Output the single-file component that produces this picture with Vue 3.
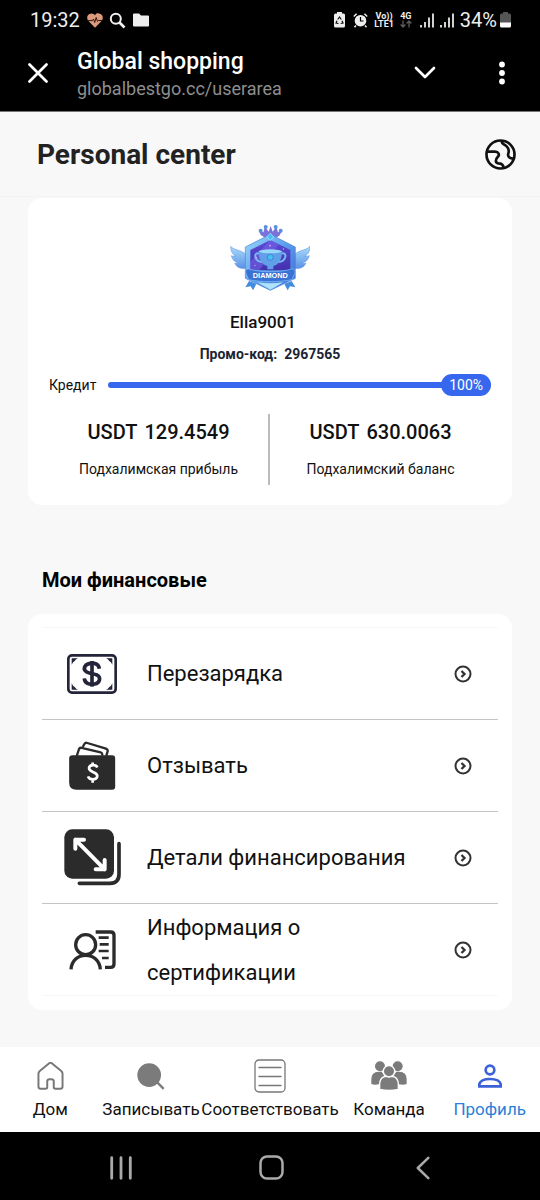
<template>
  <div class="screen">
    <header class="device-top">
      <div class="status-bar">
        <span class="clock">19:32</span>
        <svg class="heart" viewBox="0 0 16 15" aria-hidden="true">
          <path d="M8 14.8L1.4 8C-.6 5.500 0 2.200 2.400 1 4.600-.1 7 .5 8 2.400 9-.5 11.400-.1 13.600 1 16 2.200 16.600 5.500 14.600 8z" fill="#dc9a7c" />
          <path d="M1 7.600h4.500l1-1.600 1.200 3.500 1.500-5 1.300 4 1-1H15" fill="none" stroke="#2b1710" stroke-width="1" />
        </svg>
        <svg class="lens" viewBox="0 0 17 17" fill="none" stroke="#f2f2f2" aria-hidden="true">
          <circle cx="6.800" cy="6.800" r="5" stroke-width="2" />
          <path d="M10.500 10.500L15.500 15.500" stroke-width="2.600" />
        </svg>
        <svg class="folder" viewBox="0 0 16 14" aria-hidden="true">
          <path d="M1 .5h5l2 2h7q1 0 1 1v9q0 1-1 1H1q-1 0-1-1v-11q0-1 1-1z" fill="#eee" />
        </svg>
        <div class="status-right">
          <svg class="saver" viewBox="0 0 11 16" aria-hidden="true">
            <path d="M3 0h5v1.500h1.500q1.500 0 1.500 1.500v11q0 1.500-1.500 1.500h-8Q0 15.500 0 14V3q0-1.500 1.500-1.500H3z" fill="#eee" />
            <path d="M3.700 7.500L5.500 5l1.800 2.500M8 8.700l1 2.300-2.300.5M4.500 11.500L2 11l1-2.300" fill="none" stroke="#111" stroke-width="1.200" />
          </svg>
          <svg class="alarm" viewBox="0 0 15 15" aria-hidden="true">
            <circle cx="7.500" cy="7.700" r="5.800" fill="#eee" />
            <path d="M.8 3.500L3.600.8M14.200 3.500L11.400.8M3 12.500l-1.500 1.800M12 12.500l1.500 1.800" stroke="#eee" stroke-width="1.500" />
            <path d="M7.500 4v4h3" fill="none" stroke="#000" stroke-width="1.200" />
          </svg>
          <span class="net volte"><b>Vo))</b><b>LTE1</b></span>
          <span class="net fourg">
            <b>4G</b>
            <svg viewBox="0 0 12 8" fill="none" stroke="#5c5c5c" stroke-width="1.300" aria-hidden="true">
              <path d="M3 .5v6.500M.6 4.500L3 7l2.400-2.500M9 7.500V1M6.600 3.500L9 1l2.400 2.500" />
            </svg>
          </span>
          <svg v-for="n in 2" :key="n" class="signal" viewBox="0 0 14 15" stroke="#e8e8e8" stroke-width="1.800" aria-hidden="true">
            <path d="M1 14.500V12M5 14.500V9M9 14.500V4.500M13 14.500V.5" />
          </svg>
          <span class="percent">34%</span>
          <svg class="battery" viewBox="0 0 11 16" aria-hidden="true">
            <path d="M3 0h5v1.500h1.500q1.500 0 1.500 1.500v8H0V3q0-1.500 1.500-1.500H3z" fill="#555" />
            <path d="M0 10.500h11V14q0 1.500-1.500 1.500h-8Q0 15.500 0 14z" fill="#fff" />
          </svg>
        </div>
      </div>

      <div class="tab-bar">
        <button class="bare close" aria-label="Close">
          <svg viewBox="0 0 20 20" fill="none" stroke="#fff" stroke-width="2.700" stroke-linecap="round">
            <path d="M1.500 1.500l17 17M18.500 1.500l-17 17" />
          </svg>
        </button>
        <div class="tab-text">
          <div class="tab-title">Global shopping</div>
          <div class="tab-url">globalbestgo.cc/userarea</div>
        </div>
        <button class="bare collapse" aria-label="Collapse">
          <svg viewBox="0 0 22 13" fill="none" stroke="#fff" stroke-width="2.700" stroke-linecap="round" stroke-linejoin="round">
            <path d="M2 2l9 9 9-9" />
          </svg>
        </button>
        <button class="bare more" aria-label="More">
          <svg viewBox="0 0 6 24" fill="#fff">
            <circle cx="3" cy="3.500" r="2.900" />
            <circle cx="3" cy="12" r="2.900" />
            <circle cx="3" cy="20.500" r="2.900" />
          </svg>
        </button>
      </div>
    </header>

    <div class="page-head">
      <h1>Personal center</h1>
      <button class="bare globe" aria-label="Language">
        <svg viewBox="135 87 93 93" fill="none" stroke="#111" stroke-width="8" stroke-linejoin="round">
          <circle cx="181.500" cy="133.500" r="42" />
          <path d="M142 125H165C176 125 180 134 173 141C166 148 165 159 175 160C185 160 190 164 191 174" />
          <path d="M184 92C185 103 193 102 200 109C207 116 208 121 205 130C202 139 208 146 221 146" />
        </svg>
      </button>
    </div>

    <main class="content">
      <section class="card profile">
        <svg class="emblem" viewBox="30 24 240 210" role="img" aria-label="Diamond">
          <defs>
            <linearGradient id="wing" x1="0" y1="0" x2="0" y2="1">
              <stop offset="0" stop-color="#a9dcfb" />
              <stop offset="1" stop-color="#5b92e6" />
            </linearGradient>
            <linearGradient id="frame" x1="0" y1="0" x2="1" y2="1">
              <stop offset="0" stop-color="#9edcfb" />
              <stop offset=".5" stop-color="#5a9cec" />
              <stop offset="1" stop-color="#4169d2" />
            </linearGradient>
            <linearGradient id="field" x1="0" y1="0" x2="0" y2="1">
              <stop offset="0" stop-color="#5a4cd6" />
              <stop offset="1" stop-color="#4331ae" />
            </linearGradient>
          </defs>
          <g fill="url(#wing)" stroke="#5c8fdc" stroke-width="1.500">
            <path d="M78 118C62 104 42 106 32 94C32 112 40 120 48 123C40 124 36 123 34 122C38 136 46 142 56 143C50 145 46 145 44 144C50 158 62 162 78 160z" />
            <path d="M224 118C240 104 260 106 270 94C270 112 262 120 254 123C262 124 266 123 268 122C264 136 256 142 246 143C252 145 256 145 258 144C252 158 240 162 224 160z" />
          </g>
          <path d="M122 60L116 46 130 52 135 35 146 50 152 33 158 50 169 35 174 52 187 46 178 62 152 78z" fill="#7a72d8" />
          <g fill="#568fe2">
            <circle cx="122" cy="47" r="6" />
            <circle cx="137" cy="36" r="6" />
            <circle cx="167" cy="36" r="6" />
            <circle cx="182" cy="47" r="6" />
          </g>
          <path d="M151 58L226 96V190L151 226 76 190V96z" fill="url(#frame)" stroke="#4c83da" stroke-width="2" />
          <path d="M151 75L211 105V166H91V105z" fill="url(#field)" />
          <path d="M151 75L176 88 118 166H91V140z" fill="#7564e6" opacity=".6" />
          <path d="M151 55l10 10-10 12-10-12z" fill="#46bff4" stroke="#b5e8ff" stroke-width="2" />
          <path d="M119 116C100 108 100 139 128 141M183 116C202 108 202 139 174 141" fill="none" stroke="#75baf2" stroke-width="6" />
          <path d="M116 108H186C186 138 174 150 160 153V163H142V153C128 150 116 138 116 108z" fill="#619fe9" />
          <ellipse cx="151" cy="109" rx="35" ry="6" fill="#99d7fb" />
          <circle cx="151" cy="127" r="9" fill="#47c1f2" stroke="#3b6bd0" stroke-width="2" />
          <g fill="#dba9ff">
            <circle cx="150" cy="92" r="2.500" />
            <circle cx="110" cy="128" r="2" />
            <circle cx="190" cy="102" r="2" />
            <circle cx="105" cy="151" r="2" />
          </g>
          <path d="M87 198L76 217 92 214 99 226 109 207zM215 198L226 217 210 214 203 226 193 207z" fill="#438bdc" />
          <path d="M87 162C125 173 177 173 215 162C225 160 227 170 223 178L216 194C180 202 122 202 86 194L79 178C75 170 77 160 87 162z" fill="#3972d4" stroke="#82c7f8" stroke-width="2" />
          <path d="M112 202Q151 208 190 202L151 224z" fill="#aee4fb" />
          <text x="151" y="188" text-anchor="middle">DIAMOND</text>
        </svg>
        <h2 class="name">Ella9001</h2>
        <p class="promo"><span>Промо-код:</span><span>2967565</span></p>
        <div class="credit">
          <span id="credit-label">Кредит</span>
          <div class="track" role="progressbar" aria-labelledby="credit-label" :aria-valuenow="credit">
            <div class="fill" :style="{ width: credit + '%' }"></div>
            <span class="pill">{{ credit }}%</span>
          </div>
        </div>
        <div class="totals">
          <div v-for="total in totals" :key="total.label" class="total">
            <strong><span>USDT</span><span>{{ total.amount }}</span></strong>
            <span class="total-label">{{ total.label }}</span>
          </div>
        </div>
      </section>

      <h2 class="section-title">Мои финансовые</h2>

      <section class="card finance">
        <ul>
          <li v-for="item in finance" :key="item.icon">
            <a href="#" class="row">
              <span class="row-icon">
                <svg v-if="item.icon === 'recharge'" class="i-note" viewBox="143 281 150 120" fill="none" stroke="#24243a">
                  <rect x="147" y="285" width="142" height="112" rx="11" stroke-width="8" />
                  <path d="M157 294H176Q170 296 166 302Q160 305 157 313zM279 294H260Q266 296 270 302Q276 305 279 313zM157 388H176Q170 386 166 380Q160 377 157 369zM279 388H260Q266 386 270 380Q276 377 279 369z" fill="#24243a" stroke="none" />
                  <path d="M240 325C238 309 222 307 212 309C194 312 190 328 202 335C210 340 223 340 233 344C246 351 242 368 226 371C209 374 196 369 195 354" stroke-width="11" />
                  <path d="M218 302V379" stroke-width="11" />
                </svg>
                <svg v-else-if="item.icon === 'withdraw'" class="i-wallet" viewBox="146 540 144 148" fill="none" stroke="#2b2b2b">
                  <path d="M172 585L179 564Q181 559 187 561L244 574Q250 576 249 584M190 558L195 549Q198 544 204 546L260 563Q267 566 265 572L261 585" stroke-width="7" />
                  <path d="M159 583H279Q288 583 288 592V678Q288 687 279 687H171Q149 687 149 665V593Q149 583 159 583z" fill="#2b2b2b" stroke="none" />
                  <path d="M234 620C230 610 211 611 209 621C208 630 219 632 226 636C239 643 235 656 221 656C212 656 208 653 206 647M220 605V614M220 656V666" stroke="#fff" stroke-width="8" />
                </svg>
                <svg v-else-if="item.icon === 'details'" class="i-expand" viewBox="132 90 171 171" fill="none" stroke="#2b2b2b">
                  <rect x="133" y="91" width="149" height="148" rx="24" fill="#2b2b2b" stroke="none" />
                  <path d="M297 134V226Q297 253 270 253H178" stroke-width="11" stroke-linecap="round" />
                  <path d="M166 122L254 211M166 149V122H192M254 183V211H227" stroke="#fff" stroke-width="12" stroke-linecap="round" stroke-linejoin="round" />
                </svg>
                <svg v-else class="i-id" viewBox="148 390 141 120" fill="none" stroke="#2b2b2b" stroke-width="10">
                  <circle cx="198" cy="434" r="30" />
                  <path d="M154 508C156 482 175 466 198 466S240 482 242 508" />
                  <path d="M228 396H273Q283 396 283 406V492Q283 502 273 502H256" />
                  <path d="M237 413H267M240 433H267M237 453H267M247 474H267" stroke-width="8" />
                </svg>
              </span>
              <span class="row-label">{{ item.label }}</span>
              <svg class="arrow" viewBox="0 0 18 18" fill="none" stroke="#333" aria-hidden="true">
                <circle cx="9" cy="9" r="7.500" stroke-width="2" />
                <path d="M7.500 6L10.500 9l-3 3" stroke-width="2.300" />
              </svg>
            </a>
          </li>
        </ul>
      </section>
    </main>

    <nav class="tabs">
      <a v-for="tab in tabs" :key="tab.icon" href="#" :class="{ active: tab.icon === 'profile' }">
        <span class="tab-icon">
          <svg v-if="tab.icon === 'home'" class="t-home" viewBox="113 77 82 86" fill="none" stroke="#777" stroke-width="6" stroke-linejoin="round">
            <path d="M150 81Q154 78 158 81L187 105Q191 108 191 113V152Q191 159 184 159H169Q164 159 164 154V137Q164 130 157 130H151Q144 130 144 137V154Q144 159 139 159H124Q117 159 117 152V113Q117 108 121 105z" />
          </svg>
          <svg v-else-if="tab.icon === 'record'" class="t-search" viewBox="410 80 85 81">
            <circle cx="447" cy="116" r="36" fill="#7b7b7b" />
            <path d="M470 137L491 158" stroke="#7b7b7b" stroke-width="7" />
          </svg>
          <svg v-else-if="tab.icon === 'match'" class="t-list" viewBox="0 0 32 34" fill="none" stroke="#777" stroke-width="1.300" stroke-linecap="round">
            <rect x="1" y="1" width="30" height="32" rx="4" />
            <path d="M5 8.500h22M5 17.500h22M5 26.500h22" />
          </svg>
          <svg v-else-if="tab.icon === 'team'" class="t-team" viewBox="305 80 108 90" fill="#7b7b7b">
            <circle cx="332" cy="96" r="15" />
            <circle cx="385" cy="96" r="15" />
            <path d="M306 149V135Q306 112 328 112H337L346 125Q330 130 329 150Q314 153 306 149zM412 149V135Q412 112 390 112H381L371 125Q387 130 388 150Q404 153 412 149z" />
            <g stroke="#fff" stroke-width="4">
              <circle cx="359" cy="111" r="17" />
              <path d="M331 165V152Q331 126 352 126Q359 130 366 126Q387 126 387 152V165Q359 172 331 165z" />
            </g>
          </svg>
          <svg v-else class="t-user" viewBox="624 88 72 72" fill="none" stroke="#3b62d8" stroke-width="8">
            <circle cx="660" cy="106" r="13" />
            <path d="M628 155V148C632 136 648 133 660 133S689 136 692 148V155z" />
          </svg>
        </span>
        <span class="tab-label">{{ tab.label }}</span>
      </a>
    </nav>

    <footer class="system-nav">
      <button class="bare" aria-label="Recent apps">
        <svg class="s-recent" viewBox="0 0 22 24" stroke="#aaa" stroke-width="2.800" stroke-linecap="round">
          <path d="M1.700 1.700v20.600M11 1.700v20.600M20.300 1.700v20.600" />
        </svg>
      </button>
      <button class="bare" aria-label="Home">
        <svg class="s-home" viewBox="0 0 25 25" fill="none" stroke="#aaa" stroke-width="2.500">
          <rect x="1.500" y="1.500" width="22" height="22" rx="6.500" />
        </svg>
      </button>
      <button class="bare" aria-label="Back">
        <svg class="s-back" viewBox="0 0 14 24" fill="none" stroke="#aaa" stroke-width="2.500" stroke-linecap="round" stroke-linejoin="round">
          <path d="M12.300 1.800L1.800 12l10.500 10.200" />
        </svg>
      </button>
    </footer>
  </div>
</template>

<script setup>
import { ref } from 'vue'

const credit = ref(100)

const totals = [
  { amount: '129.4549', label: 'Подхалимская прибыль' },
  { amount: '630.0063', label: 'Подхалимский баланс' }
]

const finance = [
  { icon: 'recharge', label: 'Перезарядка' },
  { icon: 'withdraw', label: 'Отзывать' },
  { icon: 'details', label: 'Детали финансирования' },
  { icon: 'identity', label: 'Информация о сертификации' }
]

const tabs = [
  { icon: 'home', label: 'Дом' },
  { icon: 'record', label: 'Записывать' },
  { icon: 'match', label: 'Соответствовать' },
  { icon: 'team', label: 'Команда' },
  { icon: 'profile', label: 'Профиль' }
]
</script>

<style>
body {
  background: #f8f8f8;
}
</style>

<style scoped>
.screen {
  display: flex;
  flex-direction: column;
  min-height: 100vh;
  font-family: Roboto, "Noto Sans", sans-serif;
  color: #111;
  background: #f8f8f8;
}

.screen * {
  box-sizing: border-box;
}

svg {
  display: block;
  flex: none;
}

h1, h2, p, ul {
  margin: 0;
  padding: 0;
}

a {
  color: inherit;
  text-decoration: none;
}

.bare {
  display: flex;
  align-items: center;
  justify-content: center;
  padding: 0;
  border: 0;
  background: none;
}

/* device top */
.device-top {
  background: #000;
  color: #fff;
  border-bottom: 1px solid #777;
}

.status-bar {
  display: flex;
  align-items: center;
  height: 40px;
  padding: 0 29px 0 30px;
  font-size: 20px;
  color: #eee;
}

.heart {
  width: 16px;
  height: 15px;
  margin-left: 7px;
}

.lens {
  width: 17px;
  height: 17px;
  margin-left: 6px;
}

.folder {
  width: 16px;
  height: 14px;
  margin-left: 7px;
}

.status-right {
  display: flex;
  align-items: center;
  margin-left: auto;
}

.saver,
.battery {
  width: 11px;
  height: 16px;
}

.alarm {
  width: 15px;
  height: 15px;
  margin: 0 6px 0 8px;
}

.net {
  display: flex;
  flex-direction: column;
  align-items: center;
  font-size: 9px;
  line-height: 8px;
}

.net b {
  font-weight: 700;
}

.fourg {
  margin: 0 8px 0 6px;
}

.fourg svg {
  width: 12px;
  height: 8px;
}

.signal {
  width: 14px;
  height: 15px;
  margin-right: 6px;
}

.percent {
  margin-right: 3px;
}

.tab-bar {
  display: flex;
  align-items: center;
  height: 71px;
  padding: 0 35px 6px 28px;
}

.close svg {
  width: 20px;
  height: 20px;
}

.tab-text {
  flex: 1;
  margin-left: 29px;
  padding-top: 4px;
}

.tab-title {
  font-size: 23px;
  line-height: 28px;
  font-weight: 500;
}

.tab-url {
  font-size: 18px;
  line-height: 26px;
  color: #8e8e8e;
}

.collapse svg {
  width: 22px;
  height: 13px;
}

.more {
  margin-left: 63px;
}

.more svg {
  width: 6px;
  height: 24px;
}

/* page header */
.page-head {
  display: flex;
  align-items: center;
  justify-content: space-between;
  height: 85px;
  padding: 1px 24px 0 37px;
  border-bottom: 1px solid #f3f3f3;
}

.page-head h1 {
  font-size: 28px;
  line-height: 36px;
  font-weight: 700;
  color: #222;
}

.globe svg {
  width: 31px;
  height: 31px;
}

/* content */
.content {
  flex: 1;
  padding: 0 28px 37px;
}

.card {
  border-radius: 14px;
  background: #fff;
}

.profile {
  display: flex;
  flex-direction: column;
  align-items: center;
  margin-top: 1px;
  padding: 25px 21px 20px;
}

.emblem {
  width: 80px;
  height: 70px;
}

.emblem text {
  font: bold 22px "Liberation Sans", sans-serif;
  fill: #fff;
}

.name {
  margin-top: 19px;
  padding-right: 14px;
  font-size: 17px;
  line-height: 20px;
  font-weight: 500;
}

.promo {
  display: flex;
  gap: 7px;
  margin-top: 12px;
  font-size: 14px;
  line-height: 20px;
  font-weight: 700;
  color: #1c2433;
}

.credit {
  display: flex;
  align-items: center;
  gap: 12px;
  width: 100%;
  margin-top: 10px;
  font-size: 14px;
  line-height: 22px;
}

.track {
  position: relative;
  flex: 1;
  height: 6px;
  border-radius: 3px;
  background: #ebedf0;
}

.fill {
  height: 100%;
  border-radius: 3px;
  background: #3767ee;
}

.pill {
  position: absolute;
  top: 50%;
  right: 0;
  padding: 0 8px;
  border-radius: 11px;
  background: #3767ee;
  color: #fff;
  transform: translateY(-50%);
}

.totals {
  display: grid;
  grid-template-columns: 1fr 1fr;
  width: 100%;
  margin-top: 18px;
}

.total {
  display: flex;
  flex-direction: column;
  align-items: center;
  height: 71px;
  padding-top: 6px;
}

.total:first-child {
  border-right: 2px solid #bbb;
}

.total strong {
  display: flex;
  gap: 7px;
  font-size: 20px;
  line-height: 24px;
  font-weight: 500;
}

.total-label {
  margin-top: 15px;
  font-size: 14px;
  line-height: 20px;
}

.section-title {
  margin: 62px 0 21px;
  padding-left: 14px;
  font-size: 20px;
  line-height: 26px;
  font-weight: 700;
  color: #000;
}

.finance {
  padding: 13px 14px 14px;
}

.finance ul {
  list-style: none;
  border-top: 1px solid #f7f7f7;
}

.finance li {
  border-bottom: 1px solid #c4c4c4;
}

.finance li:last-child {
  border-color: #f7f7f7;
}

.row {
  display: flex;
  align-items: center;
  min-height: 91px;
  padding: 0 26px 0 20px;
}

.row-icon {
  display: flex;
  justify-content: center;
  width: 60px;
  margin-right: 25px;
}

.row-label {
  flex: 1;
  padding-right: 20px;
  font-size: 22px;
  line-height: 45px;
}

.i-note {
  width: 50px;
  height: 40px;
}

.i-wallet {
  width: 48px;
  height: 49px;
}

.i-expand {
  width: 57px;
  height: 57px;
}

.i-id {
  width: 47px;
  height: 40px;
}

.arrow {
  width: 18px;
  height: 18px;
}

/* bottom tabs */
.tabs {
  display: flex;
  padding: 12px 0;
  background: #fff;
}

.tabs a {
  display: flex;
  flex: 1;
  flex-direction: column;
  align-items: center;
  gap: 5px;
}

.tab-icon {
  display: flex;
  align-items: center;
  height: 34px;
}

.tab-label {
  font-size: 17px;
  line-height: 22px;
}

.active {
  color: #2b80d8;
}

.t-home {
  width: 27px;
  height: 28px;
}

.t-search {
  width: 28px;
  height: 27px;
}

.t-list {
  width: 32px;
  height: 34px;
}

.t-team {
  width: 36px;
  height: 30px;
}

.t-user {
  width: 24px;
  height: 24px;
}

/* system navigation */
.system-nav {
  display: grid;
  grid-template-columns: repeat(3, 1fr);
  height: 68px;
  padding: 3px 42px 0 45px;
  background: #000;
}

.s-recent {
  width: 22px;
  height: 24px;
}

.s-home {
  width: 25px;
  height: 25px;
}

.s-back {
  width: 14px;
  height: 24px;
}
</style>
